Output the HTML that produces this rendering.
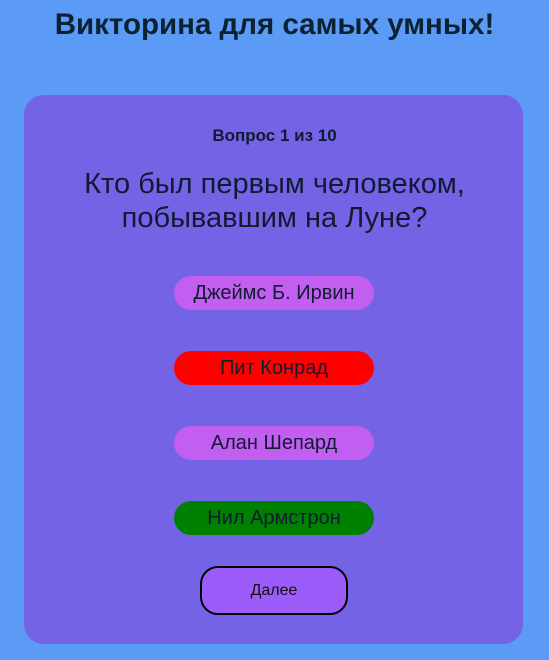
<!DOCTYPE html>
<html><head><meta charset="utf-8"><style>
body{margin:0;width:549px;height:660px;background:#5b9af5;font-family:"Liberation Sans","DejaVu Sans",sans-serif;position:relative;overflow:hidden}
.t{position:absolute;top:8px;left:0;width:549px;text-align:center;font-size:29.5px;font-weight:bold;color:#0b2233}
.card{position:absolute;left:24px;top:95px;width:499px;height:549px;background:#7563e6;border-radius:20px}
.n{position:absolute;top:126px;left:0;width:549px;text-align:center;font-size:17px;font-weight:bold;color:#111a33}
.q{position:absolute;top:167px;left:0;width:549px;text-align:center;font-size:29px;line-height:34px;color:#111a33}
.o{position:absolute;left:174px;width:200px;height:34px;border-radius:17px;text-align:center;line-height:34px;font-size:20px;color:#111a33}
.b{position:absolute;left:200px;top:566px;width:144px;height:45px;border:2px solid #000;border-radius:18px;background:#9b5cfa;text-align:center;line-height:45px;font-size:16px;color:#111}
</style></head><body>
<div class="t">Викторина для самых умных!</div>
<div class="card"></div>
<div class="n">Вопрос 1 из 10</div>
<div class="q">Кто был первым человеком,<br>побывавшим на Луне?</div>
<div class="o" style="top:276px;background:#c25ef0">Джеймс Б. Ирвин</div>
<div class="o" style="top:351px;background:#ff0000">Пит Конрад</div>
<div class="o" style="top:426px;background:#c25ef0">Алан Шепард</div>
<div class="o" style="top:501px;background:#008000">Нил Армстрон</div>
<div class="b">Далее</div>
</body></html>
